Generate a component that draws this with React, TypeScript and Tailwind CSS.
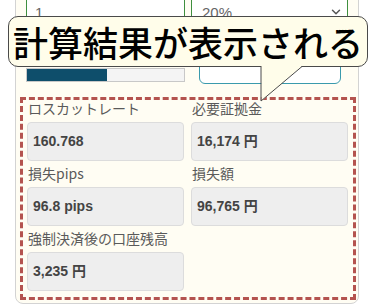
import React from "react";
import { ChevronDown } from "lucide-react";

const jp = { fontFamily: '"Noto Sans CJK JP", "Noto Sans", sans-serif' };
const num = { fontFamily: '"Liberation Sans", "Noto Sans CJK JP", sans-serif' };

function Field({ label, value }: { label: string; value: string }) {
  return (
    <div className="flex flex-col">
      <div className="h-[16px] pl-[1px] text-[14px] leading-[16px] text-[#5a5a5a] whitespace-nowrap" style={jp}>
        {label}
      </div>
      <div
        className="mt-[6px] flex h-[39px] items-center rounded-[4px] border border-[#dcdcdc] bg-[#eeeeee] pl-[5px] text-[14px] font-bold text-[#444]"
        style={num}
      >
        {value}
      </div>
    </div>
  );
}

export default function App() {
  return (
    <div className="relative h-[307px] w-[375px] overflow-hidden bg-white">
      <div className="ml-[15px] mt-[-24px] w-[344px] rounded-b-[8px] border border-[#d3d3d3] bg-[#fffdf3] pb-[3px]">
        {/* inputs row */}
        <div className="grid grid-cols-[159px_157px] gap-x-[6px] px-[10px]">
          <div className="h-[52px] border border-[#3f8f3f] bg-white pl-[8px] pt-[24px] text-[15px] leading-[22px] text-[#666]" style={num}>
            1
          </div>
          <div className="flex h-[52px] items-start justify-between border border-[#3f8f3f] bg-white pl-[10px] pr-[4px] pt-[24px] text-[15px] leading-[22px] text-[#666]" style={num}>
            <span>20%</span>
            <ChevronDown size={14} strokeWidth={2.5} className="mt-[3px] text-[#555]" />
          </div>
        </div>
        {/* progress + button row */}
        <div className="mt-[21px] grid grid-cols-[159px_157px] items-end gap-x-[6px] px-[10px]">
          <div className="mb-[2px] flex h-[14px] overflow-hidden border border-[#c8c8c8] bg-[#f4f4f4]">
            <div className="h-full w-[80px] bg-[#0e4e6b]" />
          </div>
          <div className="ml-[8px] h-[34px] w-[142px] rounded-[6px] border-[1.5px] border-[#3a9aad] bg-white" />
        </div>
        {/* result box */}
        <div className="ml-[4px] mt-[13px] w-[336px] border-[3px] border-dashed border-[#b4534f] pb-[6px] pl-[4px] pr-[5px]">
          <div className="grid grid-cols-[157px_157px] gap-x-[7px] gap-y-[4px]">
            <Field label="ロスカットレート" value="160.768" />
            <Field label="必要証拠金" value="16,174 円" />
            <Field label="損失pips" value="96.8 pips" />
            <Field label="損失額" value="96,765 円" />
            <Field label="強制決済後の口座残高" value="3,235 円" />
          </div>
        </div>
      </div>

      {/* speech bubble overlay */}
      <div
        className="absolute left-[8px] top-[16px] flex h-[51px] w-[360px] items-center justify-center rounded-[10px] border border-[#4a4a4a] bg-[#fffdea]"
        style={jp}
      >
        <span className="text-[35px] font-medium leading-none text-black">計算結果が表示される</span>
      </div>
      <svg className="absolute left-[260px] top-[66px]" width="44" height="37" viewBox="0 0 44 37">
        <polygon points="1,0 42,0 1.5,35" fill="#fffdea" />
        <polyline points="1,0 1,35 42,0.5" fill="none" stroke="#4a4a4a" strokeWidth="1" />
      </svg>
    </div>
  );
}
